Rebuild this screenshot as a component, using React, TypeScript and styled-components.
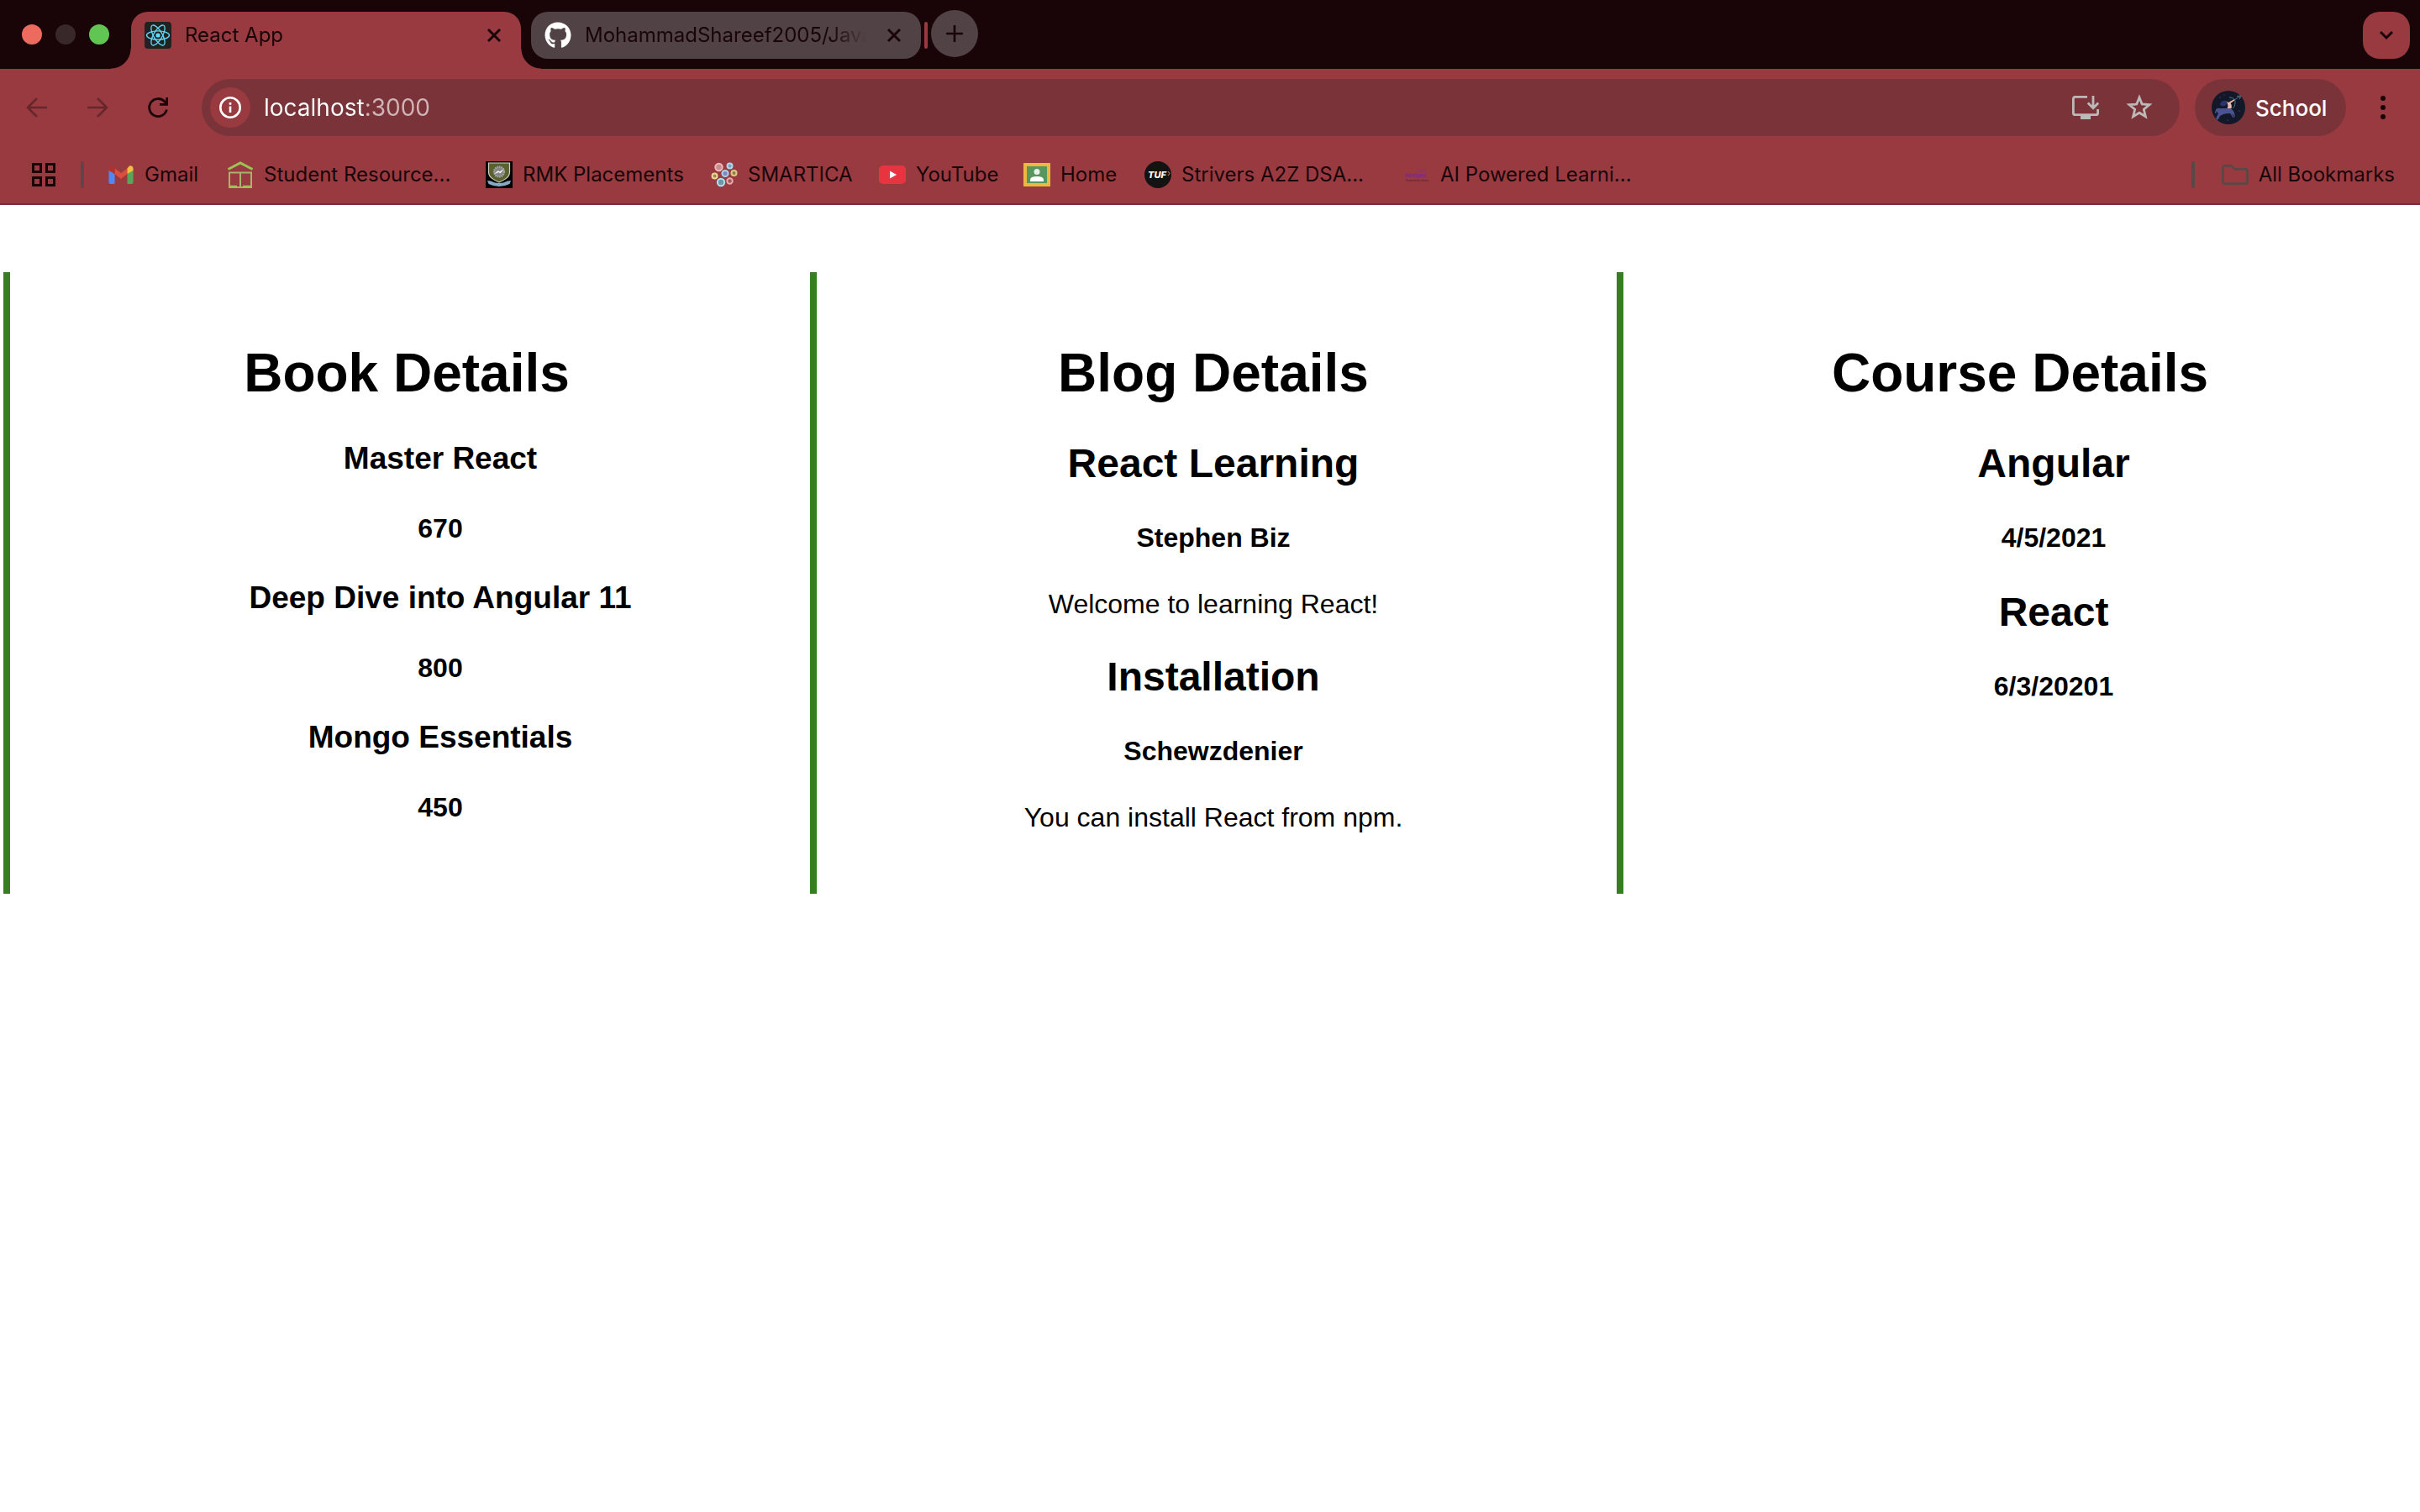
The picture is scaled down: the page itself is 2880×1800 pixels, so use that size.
import React from "react";
import styled, { createGlobalStyle, css } from "styled-components";
import { FaGithub } from "react-icons/fa";

const ink = "#190508";
const theme = "#993a41";
const field = "#7a3439";
const muted = "#5c4647";

const GlobalStyle = createGlobalStyle`
  * { box-sizing: border-box; }
  body { margin: 0; background: #fff; }
  button { border: 0; padding: 0; background: none; color: inherit; font: inherit; }
  svg { display: block; flex: none; }
`;

const Chrome = styled.header`
  font-family: Inter, "Noto Sans", sans-serif;
  color: ${ink};
  background: ${theme};
  border-bottom: 2px solid #772e37;
`;

const TabStrip = styled.div`
  display: flex;
  align-items: flex-start;
  height: 82px;
  padding: 14px 12px 0 26px;
  background: ${ink};
`;

const WindowControls = styled.div`
  display: flex;
  gap: 16px;
  margin: 15px 26px 0 0;
`;

const WindowButton = styled.button<{ $color: string }>`
  width: 24px;
  height: 24px;
  border-radius: 50%;
  background: ${(p) => p.$color};
`;

const Tab = styled.div<{ $active?: boolean }>`
  position: relative;
  display: flex;
  align-items: center;
  width: 464px;
  height: 56px;
  padding: 0 20px 0 16px;
  border-radius: 20px;
  background: #514345;
  ${(p) =>
    p.$active &&
    css`
      height: 68px;
      padding-bottom: 12px;
      margin-right: 12px;
      border-radius: 20px 20px 0 0;
      background: ${theme};
      &::before,
      &::after {
        content: "";
        position: absolute;
        bottom: 0;
        width: 24px;
        height: 24px;
      }
      &::before {
        right: 100%;
        background: radial-gradient(circle at 0 0, transparent 23px, ${theme} 24px);
      }
      &::after {
        left: 100%;
        background: radial-gradient(circle at 100% 0, transparent 23px, ${theme} 24px);
      }
    `}
`;

const TabTitle = styled.span`
  flex: 1;
  margin: 0 12px 0 16px;
  white-space: nowrap;
  font-size: 24px;
  line-height: 32px;
  mask-image: linear-gradient(to right, #000 calc(100% - 52px), transparent calc(100% - 8px));
`;

const CloseButton = styled.button`
  width: 24px;
  height: 24px;
`;

const TabDivider = styled.span`
  width: 4px;
  height: 32px;
  margin: 12px 4px 0;
  border-radius: 2px;
  background: ${theme};
`;

const NewTabButton = styled.button`
  display: grid;
  place-items: center;
  width: 56px;
  height: 56px;
  margin-top: -2px;
  border-radius: 50%;
  background: #514345;
`;

const TabSearchButton = styled.button`
  display: grid;
  place-items: center;
  width: 56px;
  height: 56px;
  margin-left: auto;
  border-radius: 20px;
  background: ${theme};
`;

const Toolbar = styled.div`
  display: flex;
  align-items: center;
  padding: 12px 28px 0;
`;

const NavButtons = styled.div`
  display: flex;
  gap: 40px;
  margin-right: 36px;
`;

const IconButton = styled.button<{ $color?: string }>`
  display: grid;
  place-items: center;
  width: 32px;
  height: 32px;
  color: ${(p) => p.$color ?? ink};
`;

const AddressBar = styled.div`
  display: flex;
  align-items: center;
  flex: 1;
  height: 68px;
  padding: 0 32px 0 10px;
  border-radius: 34px;
  background: ${field};
`;

const SiteInfoButton = styled.button`
  display: grid;
  place-items: center;
  width: 48px;
  height: 48px;
  border-radius: 50%;
  color: #fff;
  background: ${theme};
`;

const AddressInput = styled.input`
  flex: 1;
  min-width: 0;
  margin: 0 16px;
  padding: 0;
  border: 0;
  outline: 0;
  font: 28px/40px Inter, "Noto Sans", sans-serif;
  color: transparent;
  background: linear-gradient(to right, #fff 121px, #d0b4b7 121px);
  background-clip: text;
`;

const AddressActions = styled.div`
  display: flex;
  gap: 32px;
`;

const ProfileButton = styled.button`
  display: flex;
  align-items: center;
  gap: 12px;
  width: 180px;
  height: 68px;
  margin: 0 28px 0 18px;
  padding-left: 20px;
  border-radius: 34px;
  color: #fff;
  background: ${field};
  font-size: 26px;
  font-weight: 500;
`;

const BookmarksBar = styled.nav`
  display: flex;
  align-items: center;
  height: 80px;
  padding: 12px 30px 0 36px;
`;

const BarDivider = styled.span<{ $gap: number }>`
  width: 4px;
  height: 32px;
  margin: 0 ${(p) => p.$gap}px;
  border-radius: 2px;
  background: ${muted};
`;

const Bookmark = styled.a<{ $width?: number }>`
  display: flex;
  align-items: center;
  gap: 12px;
  width: ${(p) => (p.$width ? `${p.$width}px` : "auto")};
  color: inherit;
  text-decoration: none;
  white-space: nowrap;
  font-size: 24px;
  line-height: 32px;
`;

const AllBookmarks = styled.div`
  display: flex;
  align-items: center;
  margin-left: auto;
`;

const Page = styled.main`
  display: grid;
  grid-template-columns: repeat(3, 1fr);
  padding-top: 80px;
  font-family: "Liberation Sans", Arial, sans-serif;
  font-size: 32px;
  line-height: 37px;
  color: #000;
  text-align: center;
`;

const Column = styled.section`
  margin: 0 4px;
  padding: 40px 0;
  border-left: 8px solid #377e22;
`;

const Title = styled.h1`
  margin: 43px 0;
  font-size: 64px;
  line-height: 74px;
`;

const List = styled.ul`
  margin: 32px 0;
  padding: 0 0 0 80px;
  list-style: none;
`;

const Heading = styled.h2`
  margin: 40px 0;
  font-size: 48px;
  line-height: 55px;
`;

const BookName = styled.h3`
  margin: 37px 0;
  font-size: 37px;
  line-height: 44px;
`;

const Detail = styled.h4`
  margin: 43px 0 42px;
  font-size: 32px;
  line-height: 37px;
`;

const Text = styled.p`
  margin: 32px 0;
`;

const ReactIcon = () => (
  <svg width="32" height="32" viewBox="0 0 32 32">
    <rect width="32" height="32" rx="4" fill="#222" />
    <g fill="none" stroke="#61dafb" strokeWidth="1.3">
      <ellipse cx="16" cy="16" rx="13.5" ry="5.2" />
      <ellipse cx="16" cy="16" rx="13.5" ry="5.2" transform="rotate(60 16 16)" />
      <ellipse cx="16" cy="16" rx="13.5" ry="5.2" transform="rotate(120 16 16)" />
    </g>
    <circle cx="16" cy="16" r="2.6" fill="#61dafb" />
  </svg>
);

const CloseIcon = () => (
  <svg width="24" height="24" viewBox="0 0 24 24" stroke={ink} strokeWidth="3">
    <path d="M5 5l14 14M19 5L5 19" />
  </svg>
);

const PlusIcon = () => (
  <svg width="24" height="24" viewBox="0 0 24 24" stroke={ink} strokeWidth="2.6">
    <path d="M12 2v20M2 12h20" />
  </svg>
);

const ChevronIcon = () => (
  <svg width="24" height="24" viewBox="0 0 24 24" fill="none" stroke={ink} strokeWidth="3">
    <path d="M5 8l7 7 7-7" />
  </svg>
);

const ArrowIcon = ({ forward }: { forward?: boolean }) => (
  <svg width="32" height="32" viewBox="0 0 32 32" fill="none" stroke="currentColor" strokeWidth="2.6">
    <path d={forward ? "M4 16h23M16 5l11 11-11 11" : "M28 16H5M16 5L5 16l11 11"} />
  </svg>
);

const ReloadIcon = () => (
  <svg width="32" height="32" viewBox="0 0 32 32" fill="none" stroke="currentColor" strokeWidth="2.8">
    <path d="M26.4 18.5A10.5 10.5 0 1 1 24 9l2 2.5" />
    <path d="M26.6 4v8.4H18" />
  </svg>
);

const InfoIcon = () => (
  <svg width="28" height="28" viewBox="0 0 28 28" fill="none" stroke="currentColor" strokeWidth="2.6">
    <circle cx="14" cy="14" r="11.7" />
    <path d="M14 12.5V20M14 8v2.8" />
  </svg>
);

const InstallIcon = () => (
  <svg width="32" height="32" viewBox="0 0 32 32" fill="none" stroke="currentColor" strokeWidth="2.8">
    <path d="M18 3.4H3.6Q1.4 3.4 1.4 5.6V22.4Q1.4 24.6 3.6 24.6H28.4Q30.6 24.6 30.6 22.4V18" />
    <path d="M25 2V16M18.8 10.6L25 16.8L31.2 10.6" />
    <path d="M10 24h12v6H10z" fill="currentColor" stroke="none" />
  </svg>
);

const StarIcon = () => (
  <svg width="32" height="32" viewBox="0 0 32 32" fill="none" stroke="currentColor" strokeWidth="2.8">
    <path d="M16 4l3.2 8 8.8.7-6.7 5.6 2.1 8.4L16 22.2l-7.4 4.5 2.1-8.4L4 12.7l8.8-.7z" />
  </svg>
);

const AvatarIcon = () => (
  <svg width="40" height="40" viewBox="0 0 40 40">
    <circle cx="20" cy="20" r="20" fill="#121828" />
    <path
      d="M5 22q3-2 5-1h8q3-1 6 1 2 2 3 4l1 6-3-4-3-1q-5 0-8 1l-4 2-2 4-3 1 1-4 2-4q-2-2-3-4z"
      fill="#4a5290"
    />
    <path d="M8 23q-4 0-3 4M23 27l3 5" fill="none" stroke="#4a5290" strokeWidth="1.4" />
    <path d="M10 17q0-4 4-5 3-1 5 1l-1 3q-2 3-6 2z" fill="#2b3270" />
    <path d="M18 13l2 1 7-4 .6 1.2-5.100 3.800q2 2 1 6h-5q2-3-.5-8z" fill="#e9bba6" />
    <path d="M21 8q8 0 7 7 0 4-3 6M27 11l7-4.500M30 6.500l4.500-.5-1 4" fill="none" stroke="#4f7387" strokeWidth="1" />
    <g fill="#46527a">
      <circle cx="10" cy="8" r=".7" />
      <circle cx="33" cy="24" r=".7" />
      <circle cx="19" cy="35" r=".7" />
      <circle cx="15" cy="5" r=".6" />
    </g>
  </svg>
);

const MenuIcon = () => (
  <svg width="32" height="32" viewBox="0 0 32 32" fill="currentColor">
    <circle cx="16" cy="5" r="3" />
    <circle cx="16" cy="16" r="3" />
    <circle cx="16" cy="27" r="3" />
  </svg>
);

const AppsIcon = () => (
  <svg width="32" height="32" viewBox="0 0 32 32" fill="none" stroke="currentColor" strokeWidth="3">
    <path d="M3.500 3.500h9v9h-9zM19.500 3.500h9v9h-9zM3.500 19.500h9v9h-9zM19.500 19.500h9v9h-9z" />
  </svg>
);

const GmailIcon = () => (
  <svg width="32" height="32" viewBox="0 0 32 32">
    <path d="M1.500 10v15q0 2 2 2h5V15z" fill="#4f87f5" />
    <path d="M30.500 10v15q0 2-2 2h-5V15z" fill="#58a55c" />
    <path d="M8.500 8.500L16 14l7.500-5.500V15L16 21l-7.500-6z" fill="#d94f3d" />
    <path d="M1.500 11V8q.8-3.500 4.500-2.500l2.500 3V15z" fill="#b3322a" />
    <path d="M30.500 11V8q-.8-3.500-4.500-2.500l-2.500 3V15z" fill="#f2bd42" />
  </svg>
);

const PavilionIcon = () => (
  <svg width="32" height="32" viewBox="0 0 32 32" fill="none">
    <path d="M1.500 9.500L16 2l14.500 7.500" stroke="#9cc455" strokeWidth="3" />
    <path d="M3 13.500h26V31H3zM16 13v18" stroke="#a8b46a" strokeWidth="2" />
    <path d="M3 30h9M19 30h9" stroke="#9cc455" strokeWidth="2.500" />
  </svg>
);

const ShieldIcon = () => (
  <svg width="32" height="32" viewBox="0 0 32 32">
    <rect width="32" height="32" fill="#000" />
    <path d="M3.500 2h25v11c0 6-6 9-12.500 12C9.500 22 3.500 19 3.500 13z" fill="#59622f" stroke="#d0d2c4" strokeWidth="1.200" />
    <circle cx="16" cy="12.500" r="6" fill="#858585" stroke="#a8a8a8" strokeWidth="2.200" strokeDasharray="1.500 1" />
    <path d="M10 15l5-4 1 1.500 6-3-5 5-1-1.500z" fill="#fff" />
    <path d="M2 23l4 .5q10 5 20 0l4-.5-1.500 4Q16 33 3.500 27z" fill="#86a9c6" />
  </svg>
);

const ClusterIcon = () => (
  <svg width="32" height="32" viewBox="0 0 32 32" strokeWidth="2">
    <circle cx="9.500" cy="7" r="4.200" fill="#c98c8e" stroke="#f0b8b8" />
    <circle cx="22.500" cy="5.500" r="3" fill="#7fa4b4" stroke="#a8d8ec" />
    <circle cx="17" cy="14.500" r="3.600" fill="#6e94bc" stroke="#a8d0f0" />
    <circle cx="27.500" cy="14" r="3" fill="#8a7c4c" stroke="#dccb84" />
    <circle cx="4.500" cy="17.500" r="3" fill="#9a8a58" stroke="#e8d890" />
    <circle cx="12" cy="25" r="4.200" fill="#6c98ac" stroke="#b0e0f0" />
    <circle cx="22.500" cy="23.500" r="3.200" fill="#9a5a5c" stroke="#eca8a8" />
  </svg>
);

const YouTubeIcon = () => (
  <svg width="32" height="32" viewBox="0 0 32 32">
    <rect y="5" width="32" height="22" rx="5" fill="#ea3340" />
    <path d="M13 11.500l8 4.500-8 4.500z" fill="#fff" />
  </svg>
);

const ClassroomIcon = () => (
  <svg width="32" height="32" viewBox="0 0 32 32">
    <rect y="2" width="32" height="28" rx="1" fill="#edb83f" />
    <rect x="4" y="6" width="24" height="20" fill="#57965c" />
    <circle cx="16" cy="12.500" r="3.500" fill="#e8f0e8" />
    <path d="M8 24v-2q0-4 8-4t8 4v2z" fill="#fff" />
  </svg>
);

const TufIcon = () => (
  <svg width="32" height="32" viewBox="0 0 32 32">
    <circle cx="16" cy="16" r="16" fill="#131313" />
    <text x="15" y="20" textAnchor="middle" fontFamily="Inter, sans-serif" fontSize="11" fontWeight="800" fontStyle="italic" fill="#fff">TUF</text>
    <path d="M28 12l2 2.500-2 2.500" fill="none" stroke="#c96a3c" strokeWidth="1.200" />
  </svg>
);

const NextgenIcon = () => (
  <svg width="32" height="32" viewBox="0 0 32 32" fontFamily="Inter, sans-serif">
    <text x="16" y="13" fontSize="5" fill="#8d2f76">RMK</text>
    <text x="2" y="19" fontSize="6" fontWeight="700" fill="#7c2a86">Nextgen</text>
    <text x="3" y="24" fontSize="3" fill="#4a1c28">Powered by Library</text>
  </svg>
);

const FolderIcon = () => (
  <svg width="32" height="32" viewBox="0 0 32 32" fill="none" stroke={muted} strokeWidth="2.800">
    <path d="M3.600 5.400H11.500L15.500 9.400H28.400Q30.600 9.400 30.600 11.600V24.400Q30.600 26.600 28.400 26.600H3.600Q1.400 26.600 1.400 24.400V7.600Q1.400 5.400 3.600 5.400z" />
  </svg>
);

const bookmarks = [
  { label: "Gmail", width: 142, Icon: GmailIcon },
  { label: "Student Resource...", width: 308, Icon: PavilionIcon },
  { label: "RMK Placements", width: 268, Icon: ShieldIcon },
  { label: "SMARTICA", width: 200, Icon: ClusterIcon },
  { label: "YouTube", width: 172, Icon: YouTubeIcon },
  { label: "Home", width: 144, Icon: ClassroomIcon },
  { label: "Strivers A2Z DSA...", width: 308, Icon: TufIcon },
  { label: "AI Powered Learni...", width: 308, Icon: NextgenIcon },
];

const books = [
  { id: 101, name: "Master React", price: 670 },
  { id: 102, name: "Deep Dive into Angular 11", price: 800 },
  { id: 103, name: "Mongo Essentials", price: 450 },
];

const blogs = [
  { title: "React Learning", author: "Stephen Biz", text: "Welcome to learning React!" },
  { title: "Installation", author: "Schewzdenier", text: "You can install React from npm." },
];

const courses = [
  { name: "Angular", date: "4/5/2021" },
  { name: "React", date: "6/3/20201" },
];

const BrowserChrome = () => (
  <Chrome>
    <TabStrip>
      <WindowControls>
        <WindowButton $color="#ed6a5e" aria-label="Close window" />
        <WindowButton $color="#382829" aria-label="Minimize window" />
        <WindowButton $color="#61c554" aria-label="Zoom window" />
      </WindowControls>
      <Tab $active>
        <ReactIcon />
        <TabTitle>React App</TabTitle>
        <CloseButton aria-label="Close tab"><CloseIcon /></CloseButton>
      </Tab>
      <Tab>
        <FaGithub size={32} color="#fff" />
        <TabTitle>MohammadShareef2005/Java</TabTitle>
        <CloseButton aria-label="Close tab"><CloseIcon /></CloseButton>
      </Tab>
      <TabDivider />
      <NewTabButton aria-label="New tab"><PlusIcon /></NewTabButton>
      <TabSearchButton aria-label="Search tabs"><ChevronIcon /></TabSearchButton>
    </TabStrip>
    <Toolbar>
      <NavButtons>
        <IconButton $color="#65262c" aria-label="Back"><ArrowIcon /></IconButton>
        <IconButton $color="#65262c" aria-label="Forward"><ArrowIcon forward /></IconButton>
        <IconButton aria-label="Reload"><ReloadIcon /></IconButton>
      </NavButtons>
      <AddressBar>
        <SiteInfoButton aria-label="Site information"><InfoIcon /></SiteInfoButton>
        <AddressInput aria-label="Address" defaultValue="localhost:3000" />
        <AddressActions>
          <IconButton $color="#bdb9b9" aria-label="Install app"><InstallIcon /></IconButton>
          <IconButton $color="#bdb9b9" aria-label="Bookmark this tab"><StarIcon /></IconButton>
        </AddressActions>
      </AddressBar>
      <ProfileButton><AvatarIcon />School</ProfileButton>
      <IconButton aria-label="Menu"><MenuIcon /></IconButton>
    </Toolbar>
    <BookmarksBar>
      <IconButton aria-label="Apps"><AppsIcon /></IconButton>
      <BarDivider $gap={28} />
      {bookmarks.map(({ label, width, Icon }) => (
        <Bookmark key={label} href="#" $width={width}><Icon />{label}</Bookmark>
      ))}
      <AllBookmarks>
        <BarDivider $gap={32} />
        <Bookmark href="#"><FolderIcon />All Bookmarks</Bookmark>
      </AllBookmarks>
    </BookmarksBar>
  </Chrome>
);

export default function App() {
  return (
    <>
      <GlobalStyle />
      <BrowserChrome />
      <Page>
        <Column>
          <Title>Book Details</Title>
          <List>
            {books.map((book) => (
              <li key={book.id}>
                <BookName>{book.name}</BookName>
                <Detail>{book.price}</Detail>
              </li>
            ))}
          </List>
        </Column>
        <Column>
          <Title>Blog Details</Title>
          {blogs.map((blog) => (
            <article key={blog.title}>
              <Heading>{blog.title}</Heading>
              <Detail>{blog.author}</Detail>
              <Text>{blog.text}</Text>
            </article>
          ))}
        </Column>
        <Column>
          <Title>Course Details</Title>
          <List>
            {courses.map((course) => (
              <li key={course.name}>
                <Heading>{course.name}</Heading>
                <Detail>{course.date}</Detail>
              </li>
            ))}
          </List>
        </Column>
      </Page>
    </>
  );
}
